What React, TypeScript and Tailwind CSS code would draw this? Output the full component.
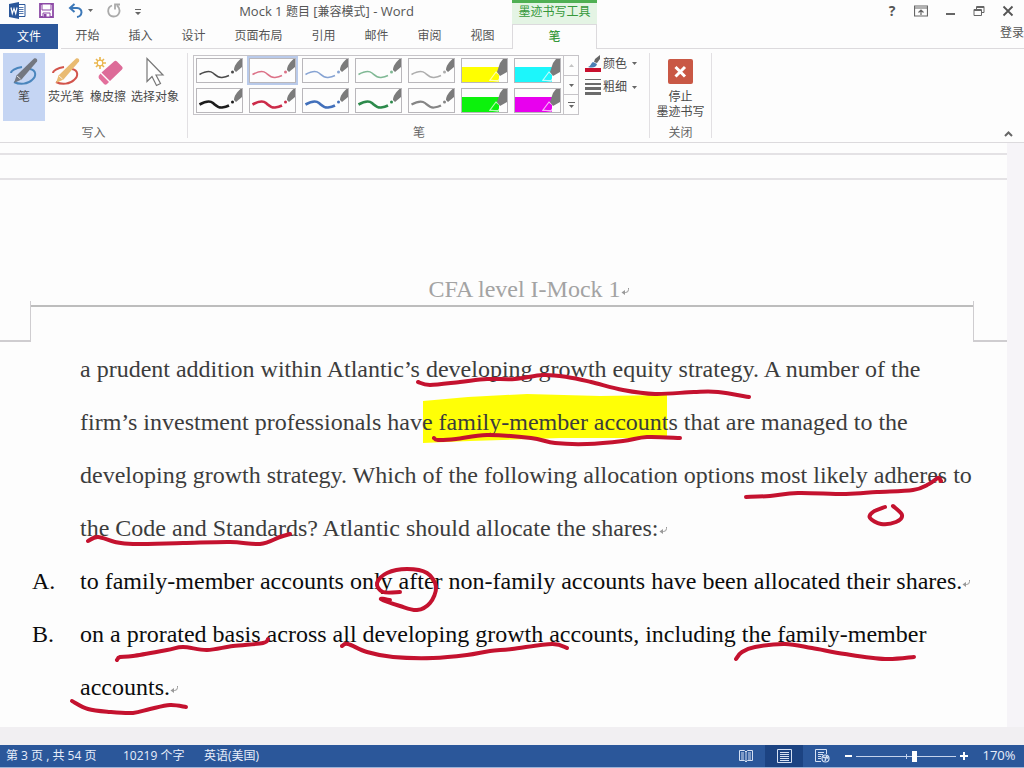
import React, { useState } from 'react';

type Point = [number, number];

const tabs = ['开始', '插入', '设计', '页面布局', '引用', '邮件', '审阅', '视图'];

const pens = [
  { color: '#4a4a4a', width: 1.5 },
  { color: '#dc7187', width: 1.5 },
  { color: '#86a3d3', width: 1.5 },
  { color: '#7fb894', width: 1.5 },
  { color: '#adadad', width: 1.5 },
  { color: '#ffff00', width: 0 },
  { color: '#1cf6fb', width: 0 },
  { color: '#1c1c1c', width: 2.6 },
  { color: '#cc2b49', width: 2.6 },
  { color: '#4270bb', width: 2.6 },
  { color: '#2c8a4b', width: 2.6 },
  { color: '#858585', width: 2.2 },
  { color: '#0cf20c', width: 0 },
  { color: '#e800ee', width: 0 },
];

const inkStrokes: Point[][] = [
  [[418, 382], [430, 385], [460, 382], [487, 379], [515, 379], [543, 375], [567, 377], [591, 382], [623, 390], [655, 394], [694, 392], [718, 392], [749, 397]],
  [[434, 438], [438, 440], [456, 439], [487, 435], [531, 438], [555, 443], [587, 444], [623, 441], [647, 437], [680, 438]],
  [[746, 497], [770, 496], [798, 493], [846, 494], [877, 492], [913, 490], [929, 484], [938, 478], [941, 481]],
  [[885, 507], [873, 512], [870, 518], [881, 524], [896, 522], [902, 515], [893, 506]],
  [[88, 541], [98, 537], [115, 542], [133, 544], [183, 543], [230, 542], [260, 544], [280, 537], [290, 534]],
  [[400, 592], [383, 592], [377, 583], [387, 573], [407, 569], [427, 573], [436, 587], [430, 603], [417, 610], [400, 606], [381, 599], [390, 600]],
  [[117, 660], [120, 657], [133, 656], [167, 650], [183, 647], [207, 650], [233, 646], [263, 643], [268, 639]],
  [[342, 646], [348, 644], [367, 652], [393, 657], [433, 658], [467, 655], [490, 651], [512, 649], [552, 644], [567, 648]],
  [[736, 659], [742, 652], [755, 647], [785, 644], [812, 648], [845, 654], [885, 659], [914, 657]],
  [[72, 701], [88, 709], [110, 712], [133, 713], [150, 709], [170, 705], [186, 707]],
];

// Catmull-Rom through the samples, written as cubic segments
const toPath = (pts: Point[]) => {
  let d = `M${pts[0][0]} ${pts[0][1]}`;
  for (let i = 0; i < pts.length - 1; i++) {
    const p0 = pts[i - 1] || pts[i];
    const p1 = pts[i];
    const p2 = pts[i + 1];
    const p3 = pts[i + 2] || p2;
    d += ` C${p1[0] + (p2[0] - p0[0]) / 6} ${p1[1] + (p2[1] - p0[1]) / 6}`;
    d += ` ${p2[0] - (p3[0] - p1[0]) / 6} ${p2[1] - (p3[1] - p1[1]) / 6} ${p2[0]} ${p2[1]}`;
  }
  return d;
};

const Caret: React.FC<{ light?: boolean }> = ({ light }) => (
  <svg width="5" height="3" viewBox="0 0 5 3" className="shrink-0">
    <path d="M0 0h5L2.5 3z" fill={light ? '#c4c4c4' : '#666'} />
  </svg>
);

const PenIcon: React.FC<{ body: string; loop: string }> = ({ body, loop }) => (
  <svg width="28" height="30" viewBox="0 0 28 30" fill="none">
    <path d="M12 10C5 11 1 14 1 16M20 12c6 1 7 7 2 11-4 4-12 5-18 2" stroke={loop} strokeWidth="2" />
    <path d="M24 1.500c2-1 4 1 3 3L11.500 22.500 4 26l2.500-7.500z" fill={body} />
    <path d="M7 19l3.500 3" stroke="#fff" strokeWidth="0.800" />
  </svg>
);

const EraserIcon = () => (
  <svg width="32" height="30" viewBox="0 0 32 30" fill="none">
    <path d="M8 0v12M2 6h12M4 2l8 8M12 2l-8 8" stroke="#eab64f" strokeWidth="1.600" />
    <circle cx="8" cy="6" r="2.800" fill="#fff" stroke="#eab64f" strokeWidth="1.200" />
    <path d="M22 4.500q1.500-1.500 3 0l5 5q1.500 1.500 0 3L18 24l-8.500-8.500z" fill="#dd6b98" />
    <path d="M8.500 16.500L17 25l-2 2q-1.500 1.500-3 0l-5-5.500q-1-1.500 0-3z" fill="#e36f9c" />
  </svg>
);

const PointerIcon = () => (
  <svg width="20" height="30" viewBox="0 0 20 30" fill="none">
    <path d="M2 1.500v23l5-5 4.500 9 4-2-4.500-8.500h7z" fill="#fff" stroke="#777" strokeWidth="1.200" />
  </svg>
);

const PenSwatch: React.FC<{ color: string; width: number }> = ({ color, width }) => (
  <svg width="45" height="23" viewBox="0 0 45 23" fill="none" className="block">
    {width > 0 ? (
      <>
        <path d="M2.500 15.500C8 12.500 13 11.500 16 14s5 5 9 4.500 5-1 7-2" stroke={color} strokeWidth={width} />
        <circle cx="35.500" cy="13" r="1.500" fill={color} />
        <path d="M37 11c0-4 3-8 6.500-11H45v8l-6 5z" fill="#7b7b7b" />
      </>
    ) : (
      <>
        <path d="M0 8h37v15H0z" fill={color} />
        <path d="M27 21.500h9.500M28 21l6-8 5 4-3 5z" stroke="#fff" strokeOpacity="0.700" strokeWidth="1.200" />
        <path d="M35 13l3-9 3-4h4v13l-7 4z" fill="#7b7b7b" />
      </>
    )}
  </svg>
);

const Mark = () => (
  <svg width="9" height="10" viewBox="0 0 9 10" fill="none" className="inline-block">
    <path d="M7.500 2v1.500q0 3-3 3H2" stroke="#999" strokeWidth="1" />
    <path d="M4 4v5L.5 6.500z" fill="#999" />
  </svg>
);

const GroupLabel: React.FC<{ children: React.ReactNode }> = ({ children }) => (
  <div className="mt-auto text-center leading-[10px] text-[#666]">{children}</div>
);

const TitleArea = () => (
  <header className="flex h-[49px] shrink-0">
    <div className="flex w-[512px] shrink-0 flex-col">
      <div className="flex h-6 items-center">
        <svg width="17" height="17" viewBox="0 0 17 17" className="ml-[9px] mb-[3px] shrink-0" aria-label="Word">
          <path d="M8 2.500h8v12H8z" fill="#fff" stroke="#2b579a" />
          <path d="M10 5.500h4.500M10 7.500h4.500M10 9.500h4.500M10 11.500h4.500" stroke="#2b579a" strokeWidth="0.800" />
          <path d="M0 2l10-2v17L0 15z" fill="#2b579a" />
          <path d="M2 5.500l1.300 6L5 6.500l1.700 5L8 5.500" fill="none" stroke="#fff" strokeWidth="1.200" />
        </svg>
        <button aria-label="保存" className="mb-[3px] ml-[13px]">
          <svg width="15" height="15" viewBox="0 0 15 15" fill="none">
            <path d="M1 1h13v13H1z" stroke="#8d4aa6" strokeWidth="1.800" />
            <path d="M3 1h9v6H3zM4 10h7v4H4z" fill="#fff" stroke="#8d4aa6" />
            <path d="M5 11h2.500v3H5z" fill="#8d4aa6" />
          </svg>
        </button>
        <button aria-label="撤消" className="mb-[3px] ml-[14px] flex items-center gap-[5px]">
          <svg width="15" height="15" viewBox="0 0 15 15" fill="none">
            <path d="M2 5h7q4.500.500 4.500 4.500Q13 13.500 9 14M6.500 1L2 5l4.500 4" stroke="#3c78b8" strokeWidth="2" />
          </svg>
          <Caret />
        </button>
        <button aria-label="恢复" className="mb-[3px] ml-[14px]">
          <svg width="14" height="15" viewBox="0 0 14 15" fill="none">
            <path d="M5 2.500C-.5 4.500 0 13 6.500 13.500c7 0 7.500-8 3.500-11M8 6.500V1.500h5" stroke="#aaa" strokeWidth="1.800" />
          </svg>
        </button>
        <button aria-label="自定义" className="mb-[1px] ml-[14px]">
          <svg width="6" height="6" viewBox="0 0 6 6">
            <path d="M0 0h6v1H0zM0 3h6L3 6z" fill="#666" />
          </svg>
        </button>
        <h1 className="flex-1 pb-[3px] text-center text-[13px] leading-5 text-[#555]">
          Mock 1 <span className="text-xs">题目</span> [<span className="text-xs">兼容模式</span>] - Word
        </h1>
      </div>
      <nav className="flex h-[25px] text-[#555]">
        <button className="mr-[3px] w-[58px] bg-[#2b579a] text-white">文件</button>
        {tabs.map((t) => (
          <button key={t} className={`border-b border-[#dcdadd] ${t.length > 2 ? 'w-[77px]' : 'w-[53px]'}`}>{t}</button>
        ))}
        <div className="flex-1 border-b border-[#dcdadd]" />
      </nav>
    </div>
    <div className="flex w-[85px] shrink-0 flex-col text-[#35983a]">
      <div className="h-6 border-t-[3px] border-[#4fb053] bg-[#e4f4e4] text-center leading-[18px]">墨迹书写工具</div>
      <button className="flex-1 border-x border-t border-[#dcdadd] font-medium">笔</button>
    </div>
    <div className="flex flex-1 flex-col border-b border-[#dcdadd] text-[#555]">
      <div className="flex h-[22px] items-center justify-end gap-[15px] pr-[9px]">
        <button aria-label="帮助" className="w-[14px] text-sm font-bold">?</button>
        <button aria-label="功能区显示选项">
          <svg width="14" height="12" viewBox="0 0 14 12" fill="none" stroke="#666">
            <path d="M.5 1h13v10H.5zM.5 3h13M7 10V5M4.500 7.500L7 5l2.500 2.500" strokeWidth="1.200" />
          </svg>
        </button>
        <button aria-label="最小化" className="flex h-3 w-[14px] items-end justify-center">
          <span className="mb-[2px] h-[2px] w-[9px] bg-[#666]" />
        </button>
        <button aria-label="还原">
          <svg width="14" height="12" viewBox="0 0 14 12" fill="none" stroke="#666">
            <path d="M2 4.500h7.500v6H2zM4.500 4.500V1.500H12v6H9.500M4.500 2.500H12M2 5.500h7.500" />
          </svg>
        </button>
        <button aria-label="关闭">
          <svg width="14" height="12" viewBox="0 0 14 12" stroke="#555" strokeWidth="1.800">
            <path d="M2.500 1.500l9 9M11.500 1.500l-9 9" />
          </svg>
        </button>
      </div>
      <button className="self-end leading-[22px]">登录</button>
    </div>
  </header>
);

const Ribbon = () => {
  const [selected, setSelected] = useState(1);

  return (
    <section className="flex h-[94px] shrink-0 border-b border-[#dcdadd] text-[#4a4a4a]">
      <div className="my-1 flex w-[188px] shrink-0 flex-col border-r border-[#e2e0e3]">
        <div className="flex h-[68px] pl-[3px] leading-4">
          <button className="flex w-[42px] flex-col items-center gap-[2px] bg-[#c5d5f3] pt-[4px]">
            <PenIcon body="#737780" loop="#4a86bd" />笔
          </button>
          <button className="flex w-[42px] flex-col items-center gap-[2px] pt-[4px]">
            <PenIcon body="#e9bb72" loop="#d2544c" />荧光笔
          </button>
          <button className="flex w-[42px] flex-col items-center gap-[2px] pt-[4px]">
            <EraserIcon />橡皮擦
          </button>
          <button className="flex w-[52px] flex-col items-center gap-[2px] pt-[4px]">
            <PointerIcon />选择对象
          </button>
        </div>
        <GroupLabel>写入</GroupLabel>
      </div>

      <div className="my-1 flex w-[462px] shrink-0 flex-col border-r border-[#e2e0e3] pl-[5px] pr-1">
        <div className="flex pt-[2px]">
          <div className="flex h-[60px] border border-[#c6c4c8]">
            <div className="grid grid-cols-7 content-start gap-x-0.5 gap-y-px">
              {pens.map((p, i) => (
                <button
                  key={i}
                  aria-label={`笔 ${i + 1}`}
                  onClick={() => setSelected(i)}
                  className={`border-2 ${selected === i ? 'border-[#b9caea]' : 'border-transparent'}`}
                >
                  <span className="block border border-[#b9b7bb]"><PenSwatch color={p.color} width={p.width} /></span>
                </button>
              ))}
            </div>
            <div className="flex w-[15px] flex-col divide-y divide-[#c6c4c8] border-l border-[#c6c4c8]">
              <button aria-label="上一行" className="flex flex-1 items-center justify-center"><span className="rotate-180"><Caret light /></span></button>
              <button aria-label="下一行" className="flex flex-1 items-center justify-center"><Caret /></button>
              <button aria-label="其他" className="flex flex-1 flex-col items-center justify-center gap-[2px]">
                <span className="h-px w-[7px] bg-[#666]" />
                <Caret />
              </button>
            </div>
          </div>
          <div className="ml-[5px] flex flex-col gap-[7px] whitespace-nowrap leading-4">
            <button className="flex items-center">
              <svg width="17" height="17" viewBox="0 0 17 17" className="mr-[2px] shrink-0">
                <path d="M1 13h16v4H1z" fill="#c8102e" />
                <path d="M16 0l-5 4-1 3 3 1 3-4z" fill="#666" />
                <path d="M9 7l4 2c-1 4-5 4-9 3 3-1 3-4 5-5z" fill="#4a7fb5" />
              </svg>
              颜色<span className="ml-[5px]"><Caret /></span>
            </button>
            <button className="flex items-center">
              <svg width="17" height="16" viewBox="0 0 17 16" className="mr-[2px] shrink-0">
                <path d="M1 0h16v1H1zM1 4h16v2H1zM1 8h16v3H1zM1 13h16v3H1z" fill="#6b6b6b" />
              </svg>
              粗细<span className="ml-[5px]"><Caret /></span>
            </button>
          </div>
        </div>
        <GroupLabel>笔</GroupLabel>
      </div>

      <div className="my-1 flex w-[62px] shrink-0 flex-col border-r border-[#e2e0e3]">
        <button className="flex flex-col items-center pt-[6px] leading-[15px]">
          <svg width="25" height="25" viewBox="0 0 25 25" className="mb-[5px]">
            <rect width="25" height="25" rx="2" fill="#c95845" />
            <path d="M7.500 8l9.500 9.500M17 8l-9.500 9.500" stroke="#fff" strokeWidth="3" />
          </svg>
          <span>停止</span>
          <span className="whitespace-nowrap">墨迹书写</span>
        </button>
        <GroupLabel>关闭</GroupLabel>
      </div>

      <button aria-label="折叠功能区" className="mb-[5px] ml-auto mr-[11px] self-end">
        <svg width="9" height="6" viewBox="0 0 9 6" fill="none">
          <path d="M1 5l3.500-3.500L8 5" stroke="#666" strokeWidth="2" />
        </svg>
      </button>
    </section>
  );
};

const DocumentPage = () => (
  <article className="relative flex-1 overflow-hidden bg-[#fdfdfd] pt-[10px] font-['Liberation_Serif','Noto_Sans_CJK_SC',serif] text-2xl">
    <svg width="1007" height="584" viewBox="0 143 1007 584" className="absolute left-0 top-0">
      <path d="M423 401L468 397 527 394 600 396 667 395V438L560 438 470 441 423 443z" fill="#ffff06" />
    </svg>
    <div className="relative">
      <div className="h-[27px] border-y-2 border-[#e4e2e5]" />
      <div className="flex h-[121px] items-end justify-center pl-[51px] leading-6 text-[#a3a3a3]">
        <p>CFA level I-Mock 1<Mark /></p>
      </div>
      <div className="mb-px flex h-[41px]">
        <div className="w-[31px] border-b-2 border-r border-[#cfcdd0]" />
        <div className="flex-1 pt-1"><hr className="border-t-2 border-[#bdbdbd]" /></div>
        <div className="w-[34px] border-b-2 border-l border-[#cfcdd0]" />
      </div>
      <div className="whitespace-nowrap leading-[53px] text-[#0c0c0c]">
        <p className="pl-20 text-[#3c3c3c]">
          a prudent addition within Atlantic’s developing growth equity strategy. A number of the<br />
          firm’s investment professionals have family-member accounts that are managed to the<br />
          developing growth strategy. Which of the following allocation options most likely adheres to<br />
          the Code and Standards? Atlantic should allocate the shares:<Mark />
        </p>
        <div className="flex">
          <span className="w-20 pl-8">A.</span>
          <p>to family-member accounts only after non-family accounts have been allocated their shares.<Mark /></p>
        </div>
        <div className="flex">
          <span className="w-20 pl-8">B.</span>
          <p>
            on a prorated basis across all developing growth accounts, including the family-member<br />
            accounts.<Mark />
          </p>
        </div>
      </div>
    </div>
    <svg width="1007" height="584" viewBox="0 143 1007 584" fill="none" className="pointer-events-none absolute left-0 top-0">
      {inkStrokes.map((pts, i) => (
        <path key={i} d={toPath(pts)} stroke="#c4122f" strokeWidth="4" strokeLinecap="round" strokeLinejoin="round" />
      ))}
    </svg>
  </article>
);

const StatusBar = () => {
  const [zoom, setZoom] = useState(59);

  return (
    <footer className="flex h-[23px] shrink-0 items-stretch border-b border-[#9db4d8] bg-[#2b579a] pl-[6px] text-[#e8eefa]">
      <div className="flex items-center gap-[19px] pb-[1px]">
        <span className="w-[98px]">第 3 页 , 共 54 页</span>
        <span className="w-[62px]">10219 个字</span>
        <span>英语(美国)</span>
      </div>
      <div className="ml-auto flex items-stretch">
        <button aria-label="阅读视图" className="flex w-[38px] items-center justify-center">
          <svg width="14" height="14" viewBox="0 0 14 14" fill="none" stroke="#d5e0f3">
            <path d="M.5 1.500h5L7 3l1.500-1.500h5v10h-5L7 13l-1.500-1.500h-5zM7 3v10" />
            <path d="M2 4h3M2 6h3M2 8h3M2 10h3M9 4h3M9 6h3M9 8h3M9 10h3" />
          </svg>
        </button>
        <button aria-label="页面视图" className="flex w-[38px] items-center justify-center bg-[#1c4382]">
          <svg width="15" height="14" viewBox="0 0 15 14" fill="none" stroke="#d5e0f3">
            <path d="M.5.5h14v13H.5zM3 3.500h9M3 5.500h9M3 7.500h9M3 9.500h9M3 11.500h9" />
          </svg>
        </button>
        <button aria-label="Web 版式视图" className="flex w-[38px] items-center justify-center">
          <svg width="15" height="14" viewBox="0 0 15 14" fill="none" stroke="#d5e0f3">
            <path d="M6 12.500H.5V.5h11V5M3 3.500h6M3 5.500h5M3 7.500h3M3 9.500h3" />
            <circle cx="10.500" cy="9.500" r="3.500" fill="#2b579a" strokeWidth="1.200" />
            <path d="M8 8l3 1-1 3M11 6.500l2 3" strokeWidth="1.400" />
          </svg>
        </button>
        <button aria-label="缩小" className="flex w-[15px] items-center justify-center">
          <span className="h-[2px] w-[7px] bg-white" />
        </button>
        <div className="relative flex w-[100px] items-center">
          <span className="absolute left-1/2 h-[5px] w-px bg-[#c5d3ec]" />
          <input
            type="range"
            aria-label="缩放"
            value={zoom}
            onChange={(e) => setZoom(Number(e.target.value))}
            className="relative h-3 w-full appearance-none bg-transparent [&::-webkit-slider-runnable-track]:h-px [&::-webkit-slider-runnable-track]:bg-[#c5d3ec] [&::-webkit-slider-thumb]:-mt-[5px] [&::-webkit-slider-thumb]:h-[11px] [&::-webkit-slider-thumb]:w-[5px] [&::-webkit-slider-thumb]:appearance-none [&::-webkit-slider-thumb]:bg-white"
          />
        </div>
        <button aria-label="放大" className="flex w-[15px] items-center justify-center">
          <svg width="8" height="8" viewBox="0 0 8 8"><path d="M3 0h2v3h3v2H5v3H3V5H0V3h3z" fill="#fff" /></svg>
        </button>
        <button className="w-[53px] pl-[3px] text-[13px]">170%</button>
      </div>
    </footer>
  );
};

const App: React.FC = () => {
  return (
    <div className="flex min-h-screen flex-col bg-[#fdfdfd] font-['Open_Sans','Noto_Sans_CJK_SC',sans-serif] text-xs">
      <TitleArea />
      <Ribbon />
      <main className="flex flex-1 bg-[#f1eff2] pb-[18px]">
        <DocumentPage />
        <div className="w-[17px] shrink-0 bg-[#f6f4f8]" />
      </main>
      <StatusBar />
    </div>
  );
};

export default App;
